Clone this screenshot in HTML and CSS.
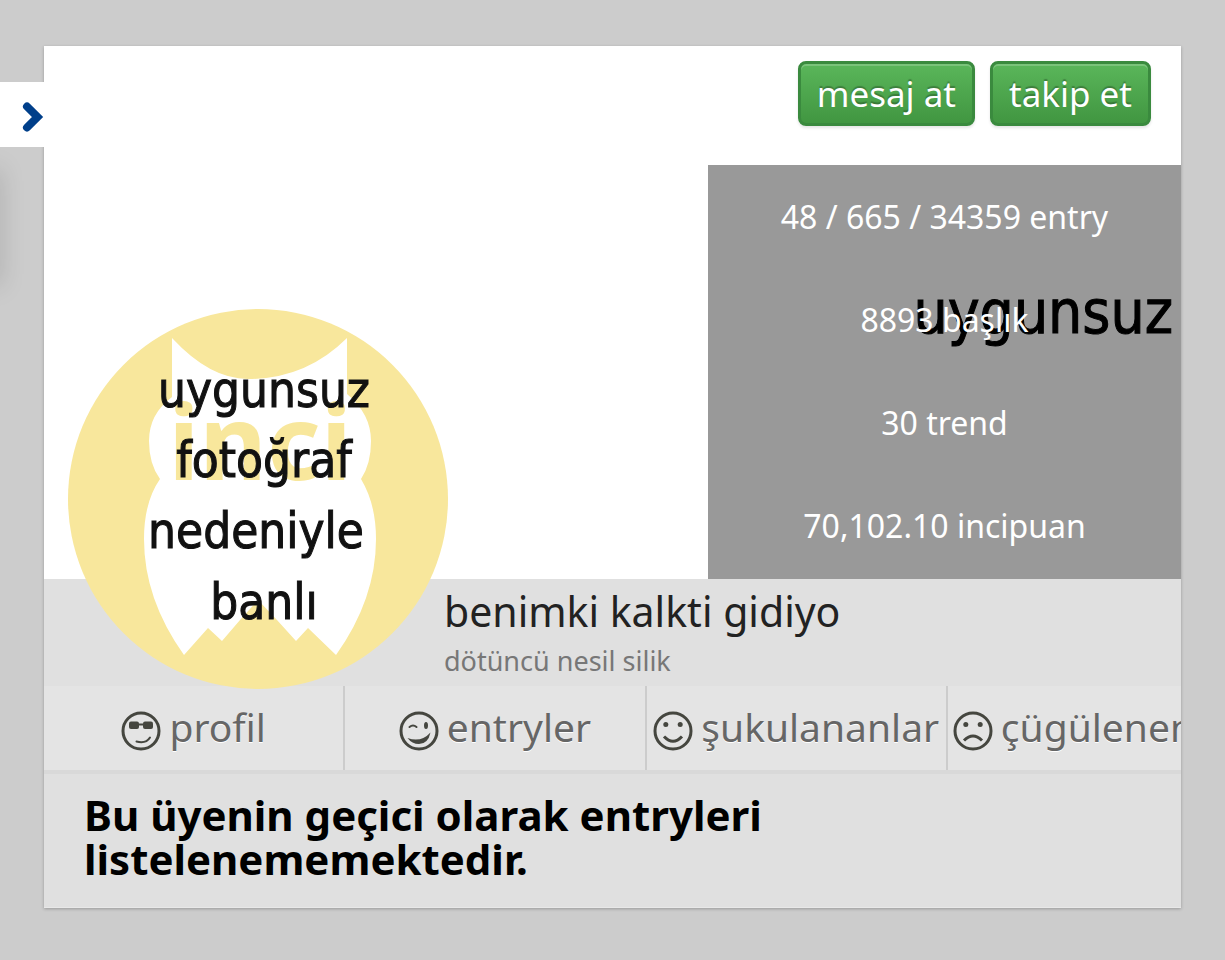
FILE: index.html
```
<!DOCTYPE html>
<html lang="tr">
<head>
  <meta charset="UTF-8">
  <meta name="viewport" content="width=device-width, initial-scale=1.0">
  <title>benimki kalkti gidiyo</title>
  <link rel="stylesheet" href="styles.css">
</head>
<body>
  <button class="menu-toggle" aria-label="menü">
    <svg width="22" height="30" viewBox="0 0 22 30"><path d="M5 4.5 L15.5 15 L5 25.5" fill="none" stroke="#003f8a" stroke-width="8" stroke-linecap="round" stroke-linejoin="miter"/></svg>
  </button>
  <div class="side-shadow"></div>

  <main class="card">
    <section class="cover">
      <div class="actions">
        <button class="btn">mesaj at</button>
        <button class="btn">takip et</button>
      </div>
      <div class="cover-text">uygunsuz</div>
      <ul class="stats">
        <li>48 / 665 / 34359 entry</li>
        <li>8893 başlık</li>
        <li>30 trend</li>
        <li>70,102.10 incipuan</li>
      </ul>
      <svg class="avatar" viewBox="0 0 380 380">
        <circle cx="190" cy="190" r="190" fill="#f8e79c"/>
        <path fill="#fff" d="M104 29 Q142 70 180 70 Q238 70 279 29 V85 Q303 105 303 132 Q303 155 293 170 Q308 195 308 230 Q308 290 268 346 L240 319 L228 332 L209 311 L190 291 L172 311 L154 332 L140 319 L116 346 Q76 290 76 230 Q76 193 92 170 Q81 155 81 132 Q81 105 104 88 Z"/>
        <text class="logo-text" x="192" y="171">inci</text>
        <g class="avatar-text">
          <text x="196" y="98">uygunsuz</text>
          <text x="196" y="168">fotoğraf</text>
          <text x="188" y="239">nedeniyle</text>
          <text x="196" y="310">banlı</text>
        </g>
      </svg>
    </section>

    <section class="info">
      <h1>benimki kalkti gidiyo</h1>
      <p>dötüncü nesil silik</p>
    </section>

    <nav class="tabs">
      <a href="#profil">
        <svg class="icon" viewBox="0 0 40 40">
          <circle cx="20" cy="20" r="18"/>
          <rect class="fill" x="8" y="10.5" width="10" height="7.5" rx="2"/>
          <rect class="fill" x="22" y="10.5" width="10" height="7.5" rx="2"/>
          <path class="thin" d="M16 13.5 H24"/>
          <path class="thin" d="M15.500 30.500 Q25 33 29 26.500"/>
        </svg>profil</a>
      <a href="#entryler">
        <svg class="icon" viewBox="0 0 40 40">
          <circle cx="20" cy="20" r="18"/>
          <path class="thin" d="M10.500 16 Q14 13 17.500 16"/>
          <ellipse class="fill" cx="27" cy="14.500" rx="2" ry="3.500"/>
          <path class="fill" d="M8.500 27 Q22 32 31.500 21.500 Q29 33 20 33 Q13 33 8.500 27z"/>
        </svg>entryler</a>
      <a href="#sukulananlar">
        <svg class="icon" viewBox="0 0 40 40">
          <circle cx="20" cy="20" r="18"/>
          <circle class="fill" cx="12.800" cy="13.500" r="2.500"/>
          <circle class="fill" cx="27.200" cy="13.500" r="2.500"/>
          <path d="M11 25.500 Q20 35 29 25.500"/>
        </svg>şukulananlar</a>
      <a href="#cugulenenler">
        <svg class="icon" viewBox="0 0 40 40">
          <circle cx="20" cy="20" r="18"/>
          <circle class="fill" cx="12.800" cy="13.500" r="2.500"/>
          <circle class="fill" cx="27.200" cy="13.500" r="2.500"/>
          <path d="M11 29.500 Q20 20.500 29 29.500"/>
        </svg>çügülenenler</a>
    </nav>

    <section class="message">
      <h2>Bu üyenin geçici olarak entryleri listelenememektedir.</h2>
    </section>
  </main>
</body>
</html>
```
FILE: styles.css
```
* { box-sizing: border-box; }
body {
  margin: 0;
  padding: 46px 44px 52px;
  background: #ccc;
  font-family: "Noto Sans", sans-serif;
  color: #222;
}
h1, h2, p, ul { margin: 0; padding: 0; font-weight: 400; }

/* left drawer */
.menu-toggle {
  position: absolute;
  top: 82px;
  left: 0;
  width: 45px;
  height: 65px;
  padding: 4px 0 0 22px;
  border: none;
  background: #fff;
  z-index: 2;
  cursor: pointer;
}
.menu-toggle svg { display: block; }
.side-shadow {
  position: absolute;
  top: 170px;
  left: -12px;
  width: 10px;
  height: 115px;
  box-shadow: 0 0 24px rgba(0,0,0,0.25);
}

.card {
  position: relative;
  background: #e0e0e0;
  box-shadow: 0 1px 3px rgba(0,0,0,0.25);
}
.cover { position: relative; background: #fff; }
.actions {
  display: flex;
  justify-content: flex-end;
  gap: 15px;
  padding: 15px 30px 39px;
}
.btn {
  padding: 0 16px;
  border: 3px solid #3a8a3e;
  border-radius: 8px;
  background: linear-gradient(#5ab65a, #419641);
  box-shadow: inset 0 2px 0 rgba(255,255,255,0.2), 0 2px 3px rgba(0,0,0,0.1);
  color: #fff;
  font-family: inherit;
  font-size: 35px;
  line-height: 59px;
  text-shadow: 0 -2px 1px rgba(0,0,0,0.25);
  cursor: pointer;
}
/* banned cover picture, seen through the stats panel */
.cover-text {
  position: absolute;
  right: 8px;
  top: 230px;
  color: #000;
  font-family: "DejaVu Sans Condensed", "Noto Sans", sans-serif;
  font-size: 60px;
  line-height: 72px;
  -webkit-text-stroke: 1px #000;
}
.stats {
  position: relative;
  width: 41.6%;
  margin-left: auto;
  padding-bottom: 2px;
  background: rgba(0,0,0,0.4);
  list-style: none;
  color: #fff;
  font-size: 32px;
  line-height: 103px;
  text-align: center;
}
.avatar {
  position: absolute;
  left: 24px;
  bottom: -110px;
  width: 380px;
  height: 380px;
}
.logo-text {
  font: bold 104px "Noto Sans", sans-serif;
  fill: #f8e79c;
  text-anchor: middle;
}
.avatar-text {
  font: 49px "DejaVu Sans Condensed", "Noto Sans", sans-serif;
  fill: #111;
  stroke: #111;
  text-anchor: middle;
}

.info { padding: 3px 20px 5px 400px; }
.info h1 { font-size: 41px; line-height: 58px; }
.info p { color: #777; font-size: 27px; line-height: 41px; }

.tabs {
  display: flex;
  overflow: hidden;
  background: #e4e4e4;
  border-bottom: 4px solid #d9d9d9;
}
.tabs a {
  flex: 0 0 26.5%;
  display: flex;
  justify-content: center;
  align-items: center;
  gap: 8px;
  padding-bottom: 2px;
  border-right: 2px solid #ccc;
  color: #666;
  font-size: 39px;
  line-height: 82px;
  text-decoration: none;
  text-shadow: 0 1px 0 #fff;
  white-space: nowrap;
}
.icon {
  flex: none;
  width: 40px;
  height: 40px;
  margin-top: 8px;
  fill: none;
  stroke: #45463f;
  stroke-width: 3;
}
.icon .fill { fill: #45463f; stroke: none; }
.icon .thin { stroke-width: 2; stroke-linecap: round; }

.message { padding: 19px 40px 26px; border-bottom: 1px solid #e8e8e8; }
.message h2 {
  max-width: 760px;
  color: #000;
  font-size: 42px;
  font-weight: 700;
  line-height: 44px;
}
```
